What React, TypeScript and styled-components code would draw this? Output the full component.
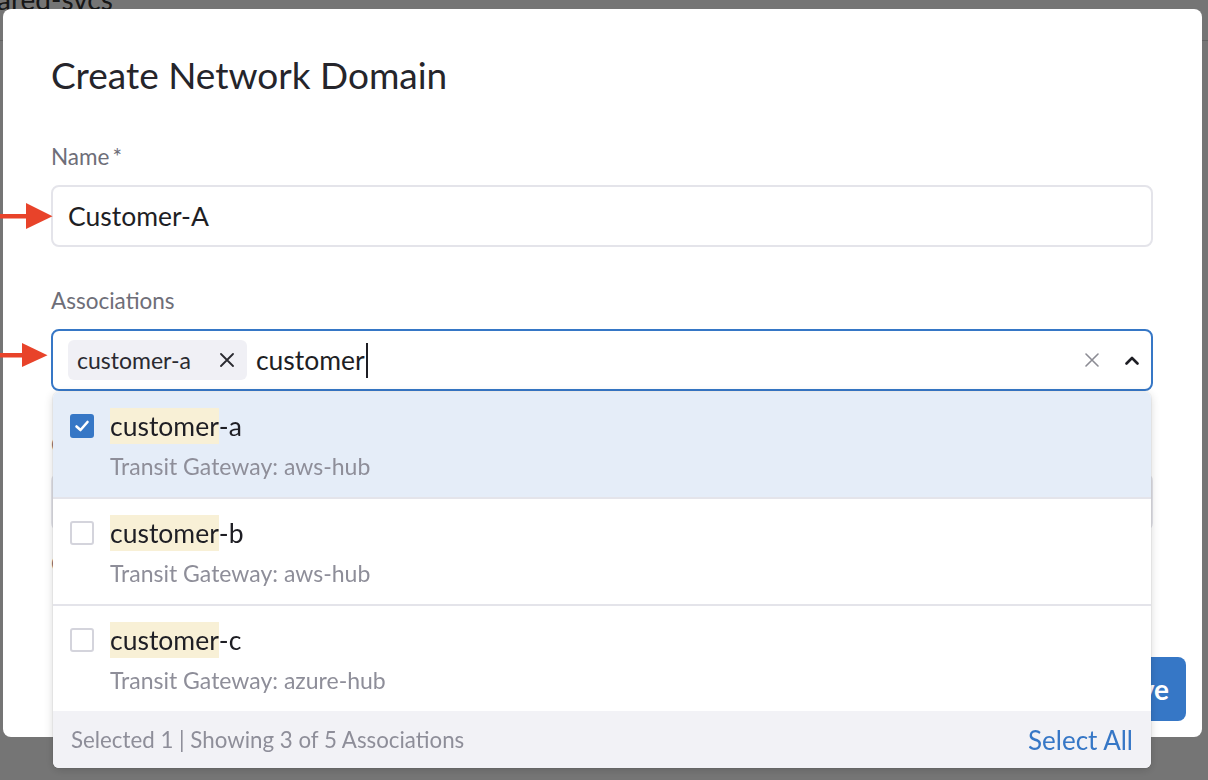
import React from "react";
import styled, { createGlobalStyle } from "styled-components";

const FONT = `"Lato", "Liberation Sans", sans-serif`;
const BLUE = "#3677c6";

const GlobalStyle = createGlobalStyle`
  html, body { margin: 0; padding: 0; background: #ffffff; }
  body { font-family: ${FONT}; overflow: hidden; }
  * { box-sizing: border-box; }
`;

const BackgroundPage = styled.div`
  width: 1208px;
  height: 780px;
  background: #ffffff;
`;

const BgHeader = styled.div`
  height: 41px;
  border-bottom: 1px solid #d8d8d8;
  overflow: hidden;
`;

const BgTitle = styled.div`
  margin: -15px 0 0 -3px;
  font-size: 28px;
  line-height: 28px;
  color: #333;
`;

const Overlay = styled.div`
  position: fixed;
  inset: 0;
  background: rgba(0, 0, 0, 0.54);
`;

const Modal = styled.div`
  position: fixed;
  top: 9px;
  left: 3px;
  width: 1199px;
  height: 728px;
  background: #ffffff;
  border-radius: 8px;
  display: flex;
  flex-direction: column;
`;

const Body = styled.div`
  flex: 1;
  padding: 44px 49px 0 48px;
  display: flex;
  flex-direction: column;
`;

const Title = styled.h2`
  margin: 0 0 46px;
  font-size: 37px;
  line-height: 44px;
  font-weight: 400;
  color: #25252b;
`;

const Field = styled.div`
  display: flex;
  flex-direction: column;
  gap: 14px;
  margin-bottom: 40px;
  position: relative;
`;

const Label = styled.div`
  font-size: 22.5px;
  line-height: 28px;
  color: #6e6e78;
`;

const Req = styled.span`
  margin-left: 3px;
`;

const TextBox = styled.div<{ $h?: number }>`
  height: ${(p) => p.$h ?? 62}px;
  border: 2px solid #e4e4ea;
  border-radius: 8px;
  padding: 0 15px;
  display: flex;
  align-items: center;
  font-size: 26.5px;
  color: #1e1e24;
`;

const Hint = styled.div`
  margin-top: -21px;
  font-size: 22.5px;
  line-height: 28px;
  color: #6e6e78;
`;

const SelectWrap = styled.div`
  position: relative;
`;

const SelectBox = styled.div`
  height: 62px;
  border: 2px solid ${BLUE};
  border-radius: 8px;
  padding: 0 7px 0 15px;
  display: flex;
  align-items: center;
`;

const Chip = styled.div`
  height: 40px;
  border-radius: 6px;
  background: #f0f0f5;
  display: flex;
  align-items: center;
  gap: 29px;
  padding: 0 13px 0 9px;
  font-size: 23px;
  color: #2a2a30;
`;

const Query = styled.div`
  flex: 1;
  margin-left: 9px;
  display: flex;
  align-items: center;
  font-size: 26.5px;
  color: #1e1e24;
`;

const Caret = styled.span`
  width: 2px;
  height: 35px;
  background: #1e1e24;
  margin-left: 1px;
`;

const IconBtn = styled.span`
  width: 24px;
  height: 24px;
  display: flex;
  align-items: center;
  justify-content: center;
  margin-left: 16px;
`;

const Dropdown = styled.div`
  position: absolute;
  top: calc(100% + 1px);
  left: 2px;
  right: 2px;
  background: #ffffff;
  border-radius: 6px;
  box-shadow: 0 2px 10px rgba(0, 0, 0, 0.16), 0 0 0 1px rgba(0, 0, 0, 0.04);
  overflow: hidden;
  z-index: 5;
`;

const Option = styled.div<{ $selected?: boolean }>`
  display: flex;
  gap: 16px;
  padding: 16px 17px 18px;
  background: ${(p) => (p.$selected ? "#e5edf8" : "#ffffff")};
  border-bottom: 2px solid #e4e4ea;
  height: 107px;
`;

const Box = styled.span<{ $checked?: boolean }>`
  width: 24px;
  height: 24px;
  margin-top: 6px;
  border-radius: 3px;
  flex: none;
  display: flex;
  align-items: center;
  justify-content: center;
  background: ${(p) => (p.$checked ? BLUE : "#ffffff")};
  border: 2px solid ${(p) => (p.$checked ? BLUE : "#d4d4dc")};
`;

const OptText = styled.div`
  display: flex;
  flex-direction: column;
  gap: 8px;
`;

const Primary = styled.div`
  font-size: 26.5px;
  line-height: 36px;
  color: #1e1e24;
`;

const Mark = styled.span`
  display: inline-block;
  background: #f8f0d6;
  line-height: 36px;
`;

const Secondary = styled.div`
  font-size: 23px;
  line-height: 28px;
  color: #8e8e99;
`;

const DropFooter = styled.div`
  height: 57px;
  margin-top: -2px;
  background: #f2f2f6;
  display: flex;
  align-items: center;
  justify-content: space-between;
  padding: 0 18px;
`;

const FooterInfo = styled.span`
  font-size: 22.3px;
  color: #8e8e99;
`;

const SelectAll = styled.span`
  font-size: 26px;
  color: ${BLUE};
`;

const ModalFooter = styled.div`
  display: flex;
  justify-content: flex-end;
  padding: 16px;
`;

const SaveButton = styled.button`
  height: 64px;
  padding: 0 17px;
  border: none;
  border-radius: 8px;
  background: ${BLUE};
  color: #ffffff;
  font-family: ${FONT};
  font-weight: 700;
  font-size: 28px;
`;

const Arrow = styled.svg<{ $top: number }>`
  position: fixed;
  left: 0;
  top: ${(p) => p.$top}px;
`;

const XIcon = ({ color, size = 14, w = 2 }: { color: string; size?: number; w?: number }) => (
  <svg width={size} height={size} viewBox="0 0 14 14">
    <path d="M1 1L13 13M13 1L1 13" stroke={color} strokeWidth={w} strokeLinecap="round" />
  </svg>
);

const Check = () => (
  <svg width="18" height="18" viewBox="0 0 18 18">
    <path d="M3.5 9.5L7.5 13L14.5 5" fill="none" stroke="#fff" strokeWidth="2.6" strokeLinecap="round" strokeLinejoin="round" />
  </svg>
);

const options = [
  { suffix: "-a", gw: "aws-hub", checked: true },
  { suffix: "-b", gw: "aws-hub", checked: false },
  { suffix: "-c", gw: "azure-hub", checked: false },
];

export default function App() {
  return (
    <>
      <GlobalStyle />
      <BackgroundPage>
        <BgHeader>
          <BgTitle>ared-svcs</BgTitle>
        </BgHeader>
      </BackgroundPage>
      <Overlay />
      <Modal>
        <Body>
          <Title>Create Network Domain</Title>
          <Field>
            <Label>
              Name<Req>*</Req>
            </Label>
            <TextBox>Customer-A</TextBox>
          </Field>
          <Field>
            <Label>Associations</Label>
            <SelectWrap>
              <SelectBox>
                <Chip>
                  customer-a
                  <XIcon color="#2a2a30" size={14} w={1.8} />
                </Chip>
                <Query>
                  customer
                  <Caret />
                </Query>
                <IconBtn>
                  <XIcon color="#8c8c94" size={14} w={1.6} />
                </IconBtn>
                <IconBtn>
                  <svg width="14" height="9" viewBox="0 0 14 9">
                    <path d="M1.5 7.5L7 2L12.5 7.5" fill="none" stroke="#1e1e24" strokeWidth="2.6" strokeLinecap="round" strokeLinejoin="round" />
                  </svg>
                </IconBtn>
              </SelectBox>
              <Dropdown>
                {options.map((o) => (
                  <Option key={o.suffix} $selected={o.checked}>
                    <Box $checked={o.checked}>{o.checked && <Check />}</Box>
                    <OptText>
                      <Primary>
                        <Mark>customer</Mark>
                        {o.suffix}
                      </Primary>
                      <Secondary>Transit Gateway: {o.gw}</Secondary>
                    </OptText>
                  </Option>
                ))}
                <DropFooter>
                  <FooterInfo>Selected 1 | Showing 3 of 5 Associations</FooterInfo>
                  <SelectAll>Select All</SelectAll>
                </DropFooter>
              </Dropdown>
            </SelectWrap>
          </Field>
          <Field>
            <Label>Connection Policy</Label>
            <TextBox $h={58} />
          </Field>
          <Hint>Optional: connect this domain to other domains</Hint>
        </Body>
        <ModalFooter>
          <SaveButton>Save</SaveButton>
        </ModalFooter>
      </Modal>
      <Arrow $top={202} width="54" height="28" viewBox="0 0 54 28">
        <rect x="0" y="12" width="28" height="4.5" fill="#e8432a" />
        <path d="M26 1L52.5 14.2L26 27Z" fill="#e8432a" />
      </Arrow>
      <Arrow $top={342} width="50" height="26" viewBox="0 0 50 26">
        <rect x="0" y="11" width="24" height="4.5" fill="#e8432a" />
        <path d="M22 1L47.5 13.2L22 25Z" fill="#e8432a" />
      </Arrow>
    </>
  );
}
